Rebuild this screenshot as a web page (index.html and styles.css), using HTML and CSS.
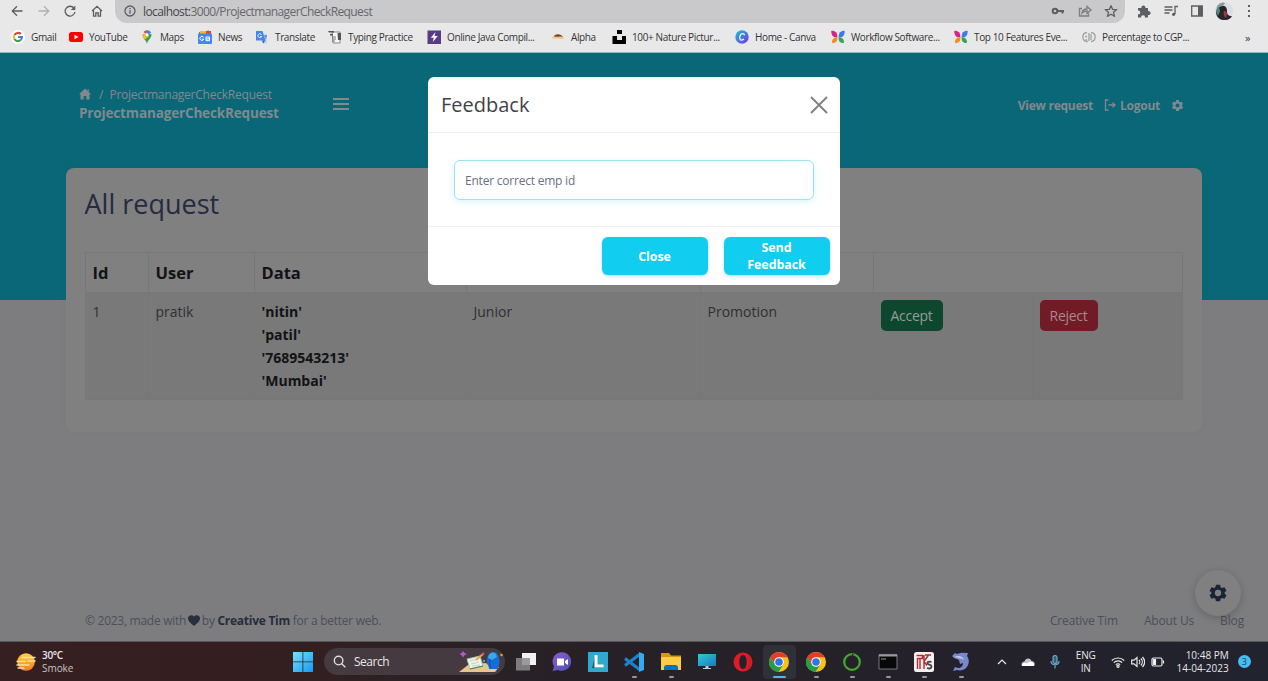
FILE: index.html
```html
<!DOCTYPE html>
<html lang="en">
<head>
<meta charset="utf-8">
<title>ProjectmanagerCheckRequest</title>
<link rel="stylesheet" href="styles.css">
</head>
<body>
<svg class="defs" width="0" height="0">
  <defs>
    <symbol id="gear" viewBox="0 0 24 24"><path fill-rule="evenodd" d="M9.5 2h5l.6 3 1.8 1 2.9-1 2.4 4.200-2.200 2v1.600l2.200 2-2.400 4.200-2.900-1-1.800 1-.6 3h-5l-.6-3-1.800-1-2.900 1-2.400-4.200 2.200-2v-1.600l-2.200-2 2.400-4.200 2.900 1 1.800-1zM12 8.200a3.800 3.800 0 1 0 0 7.600 3.800 3.800 0 0 0 0-7.600z"/></symbol>
    <symbol id="butterfly" viewBox="0 0 14 14"><path fill="#d6228a" d="M.3 1C3-.2 6 2 7 7 5 7.800 2.500 7.300 1.300 5.500.5 4.200.2 2.500.3 1z"/><path fill="#3b7de8" d="M13.700 1C11-.2 8 2 7 7c2 .8 4.500.3 5.700-1.500.8-1.300 1.100-3 1-4.500z"/><path fill="#f28b22" d="M1.200 13C.5 9.500 3 7.200 7 7c0 3.500-2.200 6.500-5.800 6z"/><path fill="#2ea55a" d="M12.800 13C13.500 9.500 11 7.200 7 7c0 3.500 2.200 6.500 5.800 6z"/><path stroke="#e9e8e9" stroke-width="1.200" d="M7 3v9"/></symbol>
    <symbol id="chrome" viewBox="0 0 20 20"><circle cx="10" cy="10" r="10" fill="#fbc116"/><path fill="#e33b2e" d="M1.340 5A10 10 0 0 1 18.660 5.300H10L5.700 12.500z"/><path fill="#269b48" d="M1.340 5A10 10 0 0 0 9.500 20L14.300 12.500 10 14.500 5.700 12.500z"/><circle cx="10" cy="10" r="4.800" fill="#fff"/><circle cx="10" cy="10" r="3.800" fill="#2b78e4"/></symbol>
  </defs>
</svg>

<header class="chrome">
  <div class="toolbar">
    <div class="nav">
      <svg viewBox="0 0 12 12"><path d="M11.500 6H1.500M6 1.300 1.300 6 6 10.700"/></svg>
      <svg class="faded" viewBox="0 0 12 12"><path d="M.5 6h10M6 1.300 10.700 6 6 10.700"/></svg>
      <svg viewBox="0 0 12 12"><path d="M10 3.200A4.900 4.900 0 1 0 10.900 7"/><path class="solid" d="M11.300.5v4.500H6.800z"/></svg>
      <svg viewBox="0 0 12 12"><path d="M1 6 6 1.300 11 6M2.500 5.200v6h2.300V8h2.400v3.200h2.300v-6"/></svg>
    </div>
    <div class="address">
      <svg class="info" viewBox="0 0 12 12"><circle cx="6" cy="6" r="5"/><path d="M6 5.300v3.500M6 2.900v1.300"/></svg>
      <span class="url"><span class="host">localhost:</span>3000/ProjectmanagerCheckRequest</span>
      <div class="address-tools">
        <svg viewBox="0 0 14 12"><circle cx="4" cy="6" r="2.300" stroke-width="2"/><path stroke-width="2" d="M6.500 6h6.500M11.500 6v2.500"/></svg>
        <svg class="share" viewBox="0 0 14 12"><path d="M4 3.500H1.500v7.500h9V8.500M4 8c.5-3 2.500-4 5-4V1.500L13 5 9 8.300V6C7 6 5.300 6.500 4 8z"/></svg>
        <svg viewBox="0 0 14 12"><path d="m7 .8 1.600 3.500 3.800.4-2.800 2.600.8 3.900L7 9.300l-3.400 1.900.8-3.900L1.600 4.700l3.800-.4z"/></svg>
      </div>
    </div>
    <div class="browser-tools">
      <svg viewBox="0 0 14 14"><path class="solid" d="M1 4h3.500a2 2 0 1 1 3.800 0H11v3.200a2 2 0 1 1 0 3.800v2.500H7.800a1.800 1.800 0 1 0-3.500 0H1v-3.300a1.800 1.800 0 1 0 0-3.500z"/></svg>
      <svg viewBox="0 0 14 14"><path d="M.5 3h8M.5 6h8M.5 9h5M11 10V2.500h3"/><circle class="solid" cx="9.600" cy="10.300" r="1.600"/></svg>
      <svg viewBox="0 0 14 14"><path d="M1.700 2h10.600v10H1.700z"/><path class="solid" d="M8 2h4.500v10H8z"/></svg>
      <svg class="avatar" viewBox="0 0 18 18"><circle cx="9" cy="9" r="9" fill="#dcdce4"/><path fill="#8e9aa0" d="M2 4c3-4 7-4 8-3L7 6 1 10z"/><path fill="#29242b" d="M8 4C4 4 0 8 1.500 13 3 17 7 18.500 10 18c4 0 6-2 7-4-4 0-5-2-5-5s-1-5-4-5z"/><path fill="#a13a3f" d="M9 9c2 0 3 1 3 3l-1 4c-2-1-3-4-2-7z"/><path fill="#4e8b7c" d="m1 9 3-4 1 4-2 5z"/></svg>
      <svg class="dots" viewBox="0 0 4 14"><path class="solid" d="M1 1h2v2H1zM1 6h2v2H1zM1 11h2v2H1z"/></svg>
    </div>
  </div>
  <nav class="bookmarks">
    <a><svg viewBox="0 0 14 14"><circle cx="7" cy="7" r="7" fill="#fff"/><g fill="none" stroke-width="2"><path stroke="#e34133" d="M3.500 5A4 4 0 0 1 9.800 4"/><path stroke="#f5b912" d="M3.400 5a4 4 0 0 0 0 4"/><path stroke="#2fa24f" d="M3.400 9a4 4 0 0 0 6.200 1"/><path stroke="#3d7ee8" d="M9.600 10A4 4 0 0 0 11 7H7"/></g></svg>Gmail</a>
    <a><svg viewBox="0 0 14 14"><rect y="2" width="14" height="10" rx="2.500" fill="#f00"/><path fill="#fff" d="m5.500 4.800 4 2.200-4 2.200z"/></svg>YouTube</a>
    <a><svg viewBox="0 0 14 14"><path fill="#2fa457" d="M7 14C6.500 10.500 2.500 8.500 2.500 4.500L11.500 4c.5 4-4 6-4.500 10z"/><path fill="#e54335" d="M3.500 2A4.600 4.600 0 0 1 7 .3l-.5 4z"/><path fill="#3f80e9" d="M6.500.3a4.600 4.600 0 0 1 4.600 2.300L7 6z"/><path fill="#f6bb1b" d="M2.500 5.500 6 3l3 3-4.500 4z"/><circle cx="7" cy="4.700" r="1.500" fill="#fff"/></svg>Maps</a>
    <a><svg viewBox="0 0 14 14"><path fill="#2fa457" d="M1 2 11 .5v4H1z"/><path fill="#f0b928" d="M2 1h10v4H2z"/><path fill="#dc4437" d="M8 1h5v3H8z"/><rect y="3.500" width="14" height="10.500" rx="1" fill="#4285f4"/><path fill="none" stroke="#fff" d="M5.500 7.200a2 2 0 1 0 .3 2H4.200M8 7h3.500v3.700H8V7m0 1.900h3.500"/></svg>News</a>
    <a><svg viewBox="0 0 14 14"><path fill="#c7d3e6" d="M6 4h6v9.500H8z"/><path fill="#4285f4" d="M1 1h6.500l3 9.500H1z"/><path fill="#2f62bc" d="M7 10.500h3.500L8 13.500z"/><path fill="none" stroke="#e8effd" d="M6.500 4.500a2 2 0 1 0 .3 2H5"/><path fill="none" stroke="#5a83bf" d="M9 6h3M11 5v1c0 2-1 3-1.500 3.500"/></svg>Translate</a>
    <a><svg viewBox="0 0 14 14"><path fill="#f7f7f7" stroke="#888" d="M4 2h8v11H5z"/><path fill="#555" d="M0 1h6v1.500H1zM9.500 3H13v7H10zM2 4h3v1.500H2z"/><path stroke="#777" d="M4 7h4M4 9h4M4 11h3"/></svg>Typing Practice</a>
    <a><svg viewBox="0 0 14 14"><path fill="#583b87" d="M.5.500h13.500v13.500H.5z"/><path fill="#fff" d="M8.500 2 3.800 7.800h3L5.700 12l5-6H7.500z"/></svg>Online Java Compil...</a>
    <a><svg viewBox="0 0 14 14"><path fill="#f3c783" d="M1 8.500C2 5 4 5 7 5s5 1 6 4z"/><path fill="#654b37" d="M3 6.500C4 3.500 10 3.500 12 7L10 6.500 6 6.800z"/></svg>Alpha</a>
    <a><svg viewBox="0 0 14 14"><path fill="#000" d="M5 0h5v4H5zM.500 6H5v4h5V6h4v8H.5z"/></svg>100+ Nature Pictur...</a>
    <a><svg viewBox="0 0 14 14"><defs><linearGradient id="canva" x2="1" y2="1"><stop stop-color="#13c9ce"/><stop offset="1" stop-color="#7a2bea"/></linearGradient></defs><circle cx="7" cy="7" r="6.700" fill="url(#canva)"/><path fill="none" stroke="#fff" stroke-width="1.200" d="M9.500 5.200C9.300 3 6 3 5 6s.5 5.500 4 3"/></svg>Home - Canva</a>
    <a><svg><use href="#butterfly"/></svg>Workflow Software...</a>
    <a><svg><use href="#butterfly"/></svg>Top 10 Features Eve...</a>
    <a><svg viewBox="0 0 14 14"><path fill="none" stroke="#a0a0a4" stroke-width="1.300" d="M5 2.500C-.5 3-.5 11 5 11.500L4 9M9 2.500c5.500.5 5.500 8.500 0 9M7 3v8M3 6.500h2M9 4v6"/></svg>Percentage to CGP...</a>
    <span class="more">»</span>
  </nav>
</header>

<main class="page">
  <div class="topbar">
    <div class="crumbs">
      <div class="trail"><svg viewBox="0 0 12 12"><path d="M6 .5 0 6.200h1.500V11.500h3.200V8h2.600v3.500h3.200V6.200H12L9.800 4.100V1.200H8.500v1.700z"/></svg><span class="slash">/</span><span class="crumb">ProjectmanagerCheckRequest</span></div>
      <h6>ProjectmanagerCheckRequest</h6>
    </div>
    <div class="burger"><i></i><i></i><i></i></div>
    <div class="links">
      <span class="view">View request</span>
      <svg class="exit" viewBox="0 0 12 12"><path d="M4.500 1H1.500v10h3M4.500 6H11M8.500 3.800 11 6 8.500 8.200"/></svg>
      <span class="logout">Logout</span>
      <svg class="cog"><use href="#gear"/></svg>
    </div>
  </div>

  <section class="card">
    <h2>All request</h2>
    <table>
      <colgroup><col class="c1"><col class="c2"><col class="c3"><col class="c4"><col class="c5"><col class="c6"><col class="c7"></colgroup>
      <thead><tr><th>Id</th><th>User</th><th>Data</th><th></th><th></th><th colspan="2"></th></tr></thead>
      <tbody><tr>
        <td>1</td><td>pratik</td>
        <td class="data">'nitin'<br>'patil'<br>'7689543213'<br>'Mumbai'</td>
        <td>Junior</td><td>Promotion</td>
        <td><button class="btn accept">Accept</button></td>
        <td><button class="btn reject">Reject</button></td>
      </tr></tbody>
    </table>
  </section>

  <footer class="footer">
    <p>© 2023, made with <svg viewBox="0 0 12 11"><path d="M6 11C2 8 0 6 0 3.300 0 .3 4-1 6 1.500 8-1 12 .3 12 3.300 12 6 10 8 6 11z"/></svg> by <b>Creative Tim</b> for a better web.</p>
    <div class="footer-links"><a>Creative Tim</a><a>About Us</a><a>Blog</a></div>
  </footer>

  <div class="fab"><svg><use href="#gear"/></svg></div>

  <div class="modal">
    <div class="modal-head"><h5>Feedback</h5><svg viewBox="0 0 18 18"><path d="m1 1 16 16M17 1 1 17"/></svg></div>
    <div class="modal-body"><div class="field">Enter correct emp id</div></div>
    <div class="modal-foot"><button class="cyan">Close</button><button class="cyan">Send<br>Feedback</button></div>
  </div>
</main>

<div class="taskbar">
  <div class="weather">
    <svg viewBox="0 0 20 18"><defs><linearGradient id="sun" x2="0" y2="1"><stop stop-color="#ffd53c"/><stop offset="1" stop-color="#f4791f"/></linearGradient></defs><circle cx="10" cy="9" r="8.800" fill="url(#sun)"/><path stroke="#f8dfb0" stroke-width="1.400" stroke-linecap="round" d="M6 4.500h13M1 8.500h8M12 8h7M1 12h12M2 15h6"/></svg>
    <div><b>30°C</b><span>Smoke</span></div>
  </div>
  <svg class="win" viewBox="0 0 20 20"><defs><linearGradient id="win" x2="1" y2="1"><stop stop-color="#75e0ff"/><stop offset="1" stop-color="#129bf3"/></linearGradient></defs><path fill="url(#win)" d="M0 0h9.500v9.500H0zM10.300 0H20v9.500h-9.700zM0 10.300h9.500V20H0zM10.300 10.300H20V20h-9.700z"/></svg>
  <div class="search">
    <svg class="glass" viewBox="0 0 14 14"><circle cx="6" cy="6" r="4.600"/><path d="m9.300 9.300 4 4"/></svg>
    <span>Search</span>
    <svg class="art" viewBox="0 0 46 22"><path fill="#e9c48f" d="M0 21 9 14 26 12 40 16 36 21z"/><path fill="#eef4ea" stroke="#a9bfae" d="M8 8 21 5 24 15 11 18z"/><path stroke="#c3d2c4" d="m11 10 8-2M12 13l8-2M13 15l8-1"/><path stroke="#3f7a5b" d="m11 18 13-3"/><path stroke="#f4a33c" stroke-width="2" d="m17 9 7-6"/><path stroke="#e6537b" stroke-width="2" d="m23 4 2-2"/><path fill="#146dd2" d="M30 18c0-4-3-4-2-9 0-10 12-11 12-1 2 5-1 6-1 10z"/><path fill="#3aa6f2" d="M29 7c1-7 8-7 9-1l-5 3z"/><path stroke="#104c9c" fill="none" d="M31 8c0 3-1 5 1 9"/><path fill="#b957d2" d="m4 0 1.500 2L8 3 5.500 4.300 4 6.500 2.700 4.300.5 3l2.200-1z"/><circle cx="42.500" cy="4" r="1.200" fill="#f0a72e"/><circle cx="25" cy="10" r="1" fill="#5bd0b8"/></svg>
  </div>
  <div class="apps">
    <span><svg viewBox="0 0 20 20"><path fill="#f1f1f2" d="M6 1h14v12H6z"/><path fill="#8d8b8d" fill-opacity=".85" d="M0 6h14v12.500H0z"/></svg></span>
    <span><svg viewBox="0 0 20 20"><defs><linearGradient id="chat" x2="1" y2="1"><stop stop-color="#8b5ec4"/><stop offset="1" stop-color="#4a51ba"/></linearGradient></defs><path fill="url(#chat)" d="M.5 19 2 14.500A9.300 9.300 0 1 1 6 18z"/><path fill="#fff" d="M5 6.500h7v7H5zM13 9l3-2v6l-3-2z"/></svg></span>
    <span><svg viewBox="0 0 20 20"><path fill="#30a9ce" d="M0 0h20v20H0z"/><path fill="#17607c" d="m4 16 3-12v9h8v3z"/><path fill="none" stroke="#fff" stroke-width="3" d="M8 3v11h7.500"/></svg></span>
    <span class="run"><svg viewBox="0 0 20 20"><path fill="none" stroke="#1b83cc" stroke-width="3.200" d="M1 6.500 15.500 17.500M1 13.500 15.500 2.500"/><path fill="#39a9ef" d="m15 0 5 2v16l-5 2z"/></svg></span>
    <span class="run"><svg viewBox="0 0 20 20"><path fill="#d89518" d="M0 1h8l2 2.500h10V17H0z"/><path fill="#ffcc45" d="M0 5h20v13H0z"/><path fill="#1272b9" d="M3 18v-3.500l2-1.500h10l2 1.500V18z"/></svg></span>
    <span><svg viewBox="0 0 20 20"><defs><linearGradient id="screen" x2="1" y2="1"><stop stop-color="#2fcbd0"/><stop offset="1" stop-color="#177bc2"/></linearGradient></defs><path fill="url(#screen)" d="M1 2h18v12H1z"/><path fill="#bfcfda" d="M8.500 14h3v2H14v1H6v-1h2.500z"/></svg></span>
    <span><svg viewBox="0 0 20 20"><path fill="#e01b28" fill-rule="evenodd" d="M10 .5a9.500 9.500 0 1 1 0 19 9.500 9.500 0 0 1 0-19zm0 2.500C7.500 3 6.300 6.500 6.300 10S7.500 17 10 17s3.700-3.500 3.700-7S12.500 3 10 3z"/><path fill="#b51a25" d="M13 2.500c5 3 5 12 0 15 6-1 7-12 0-15z"/></svg></span>
    <span class="run active"><svg><use href="#chrome"/></svg></span>
    <span class="run"><svg><use href="#chrome"/></svg></span>
    <span class="run"><svg viewBox="0 0 20 20"><circle cx="10" cy="10" r="7.800" fill="none" stroke="#42a832" stroke-width="2.200"/><path fill="#28222a" d="m10 1 2 2-2 1z"/></svg></span>
    <span class="run"><svg viewBox="0 0 20 20"><path fill="#080808" stroke="#77787c" d="M1 2.500h18V17H1z"/><path fill="#96989b" d="M1 2.500h18v2H1zM3 6.500h5v1H3z"/></svg></span>
    <span class="run"><svg viewBox="0 0 20 20"><rect width="20" height="20" rx="2.500" fill="#f4f1f0"/><g fill="none" stroke-width="1.400"><path stroke="#b62a30" d="M2.500 3.500h6v3h-5V17M6 7v10M10 3v14M14.500 3 10 9.500l3 4M11 3h6"/><path stroke="#3d4148" stroke-width="1.800" d="M17.500 10c-3-1-4.500 0-4 1.500s4 1 4 3-2 2.500-4.500 1.500"/></g></svg></span>
    <span class="run"><svg viewBox="0 0 20 20"><path fill="#7888ce" d="M1 4 4 1l2 1c5-2 8-1 11-1l-1 3c3 4 2 9-1 12-2 2-6 3-9 2l-4 1 2-4 3 1c3 0 5-2 5-5L9 12 8 8 3 6z"/><path fill="#c4cbed" d="M3 5c4-2 9-1 10 3-2-2-6-2-10-3z"/></svg></span>
  </div>
  <div class="tray">
    <svg class="up" viewBox="0 0 10 10"><path d="m1 7 4-4 4 4"/></svg>
    <svg class="cloud" viewBox="0 0 14 10"><path fill="#c3c3c8" d="M1 9C-.5 6 2 4.500 3.500 4.500 4.500 1 9 .5 10.500 4c3 0 4 3 2.500 5z"/><path fill="#fff" d="M1 9c-.5-3 3-4 5-2.500L8 5c3-1 6 1 5 4z"/></svg>
    <svg class="mic" viewBox="0 0 10 14"><rect x="3" y=".5" width="4" height="8" rx="2" fill="#35617b"/><path d="M1 6c0 5 8 5 8 0M5 10v3.500"/></svg>
    <div class="lang">ENG<br>IN</div>
    <svg class="wifi" viewBox="0 0 14 12"><path d="M.8 4.500a9 9 0 0 1 12.400 0M2.800 6.600a6 6 0 0 1 8.400 0M4.800 8.700a3 3 0 0 1 4.400 0"/><circle cx="7" cy="10.300" r="1.100"/></svg>
    <svg class="vol" viewBox="0 0 14 12"><path d="M.7 4.200H3L6 1.500v9L3 7.800H.7zM8 4c1 1 1 3 0 4M9.800 2.500c2 2 2 5 0 7M11.500 1c2.600 3 2.600 7 0 10"/></svg>
    <svg class="batt" viewBox="0 0 14 12"><rect x="1" y="2" width="10" height="8" rx="1.500"/><path fill="#fff" d="M2.500 3.500h2v5h-2zM12.500 4.500v3"/></svg>
    <div class="clock">10:48 PM<br>14-04-2023</div>
    <span class="badge">3</span>
  </div>
</div>
</body>
</html>
```
FILE: styles.css
```css
* { box-sizing: border-box; }
body { margin: 0; width: 1268px; height: 681px; overflow: hidden; display: flex; flex-direction: column; font-family: "Open Sans", "Noto Sans", sans-serif; }
svg { display: block; flex: none; }
.defs { position: absolute; }
h2, h5, h6, p { margin: 0; }
button { border: 0; font-family: inherit; padding: 0; }

/* browser */
.chrome { height: 53px; flex: none; background: #e9e8e9; border-bottom: 1px solid #8fb9bd; }
.toolbar { height: 22px; display: flex; align-items: center; }
.toolbar svg { fill: none; stroke: #5d5e61; stroke-width: 1.3; }
.toolbar .solid { fill: #5d5e61; stroke: none; }
.nav { width: 115px; padding-left: 11px; display: flex; gap: 14.500px; }
.nav svg { width: 12px; height: 12px; }
.nav .faded { opacity: .4; }
.address { width: 1010px; height: 23px; background: #c9c9cb; border-radius: 0 0 12px 12px; display: flex; align-items: center; padding-left: 9px; }
.info { width: 12px; height: 12px; }
.url { margin-left: 7px; font-size: 12px; letter-spacing: -.6px; color: #66676a; }
.host { color: #45464a; }
.address-tools { margin-left: auto; padding-right: 7px; display: flex; gap: 12.500px; }
.address-tools svg { width: 14px; height: 12px; }
.address-tools .share { opacity: .7; }
.browser-tools { padding-left: 12px; display: flex; align-items: center; gap: 12.500px; }
.browser-tools svg { width: 14px; height: 14px; }
.browser-tools .avatar { width: 18px; height: 18px; stroke: none; margin-left: -2px; }
.browser-tools .dots { width: 4px; margin-left: 2px; }
.bookmarks { height: 30px; padding-left: 11px; display: grid; grid-template-columns: 58px 71px 58px 57px 73px 99px 124px 61px 123px 96px 123px 128px 162px auto; align-items: center; font-size: 10px; letter-spacing: -.37px; color: #343438; white-space: nowrap; }
.bookmarks a { display: flex; align-items: center; gap: 6px; }
.bookmarks svg { width: 14px; height: 14px; }
.more { font-size: 11px; padding-left: 1px; }

/* page */
.page { position: relative; height: 588px; flex: none; background: linear-gradient(#0a6778 0 247px, #7d7d7f 247px); }
.topbar { height: 115px; padding: 32px 84px 0 79px; display: flex; align-items: flex-start; color: #81898d; }
.crumbs { width: 254px; }
.trail { display: flex; align-items: center; height: 18px; font-size: 12px; }
.trail svg { width: 12px; height: 12px; fill: currentColor; }
.slash { margin: 0 6px 0 8px; }
.crumb { letter-spacing: -.23px; }
.crumbs h6 { font-size: 13.500px; line-height: 21px; letter-spacing: -.15px; }
.burger { margin-top: 13px; width: 16px; display: grid; gap: 3px; }
.burger i { height: 2px; background: currentColor; }
.links { margin-left: auto; height: 40px; display: flex; align-items: center; font-size: 12px; letter-spacing: -.25px; font-weight: 700; }
.exit { width: 12px; height: 12px; margin: 0 4px 0 11px; fill: none; stroke: currentColor; stroke-width: 1.300; }
.cog { width: 13px; height: 13px; margin-left: 11px; fill: currentColor; }
.card { width: 1136px; height: 264px; margin-left: 65.500px; background: #808080; border-radius: 8px; padding: 18px 19px; box-shadow: 0 0 14px rgba(0,0,0,.02); }
.card h2 { height: 66px; font-size: 27px; line-height: 36px; font-weight: 400; color: #262b41; }
table { width: 1097px; table-layout: fixed; border-collapse: collapse; color: #2f3031; }
.c1 { width: 63px; } .c2 { width: 106px; } .c3 { width: 212px; } .c4 { width: 234px; } .c5 { width: 173px; } .c6 { width: 159px; } .c7 { width: 150px; }
th, td { border: 1px solid #767778; text-align: left; vertical-align: top; padding: 8px 6px 0 7px; }
th { height: 40px; font-size: 16.500px; line-height: 23px; color: #111315; }
td { height: 107px; padding-top: 7px; background: #797979; font-size: 14px; line-height: 23px; }
.data { font-weight: 700; color: #111315; }
.btn { display: block; height: 31px; border-radius: 5px; font-size: 14px; letter-spacing: -.3px; color: #969c98; }
.accept { width: 62px; background: #0d472d; }
.reject { width: 58px; background: #701b25; color: #aa888c; }
.footer { padding: 179px 24px 0 85px; display: flex; justify-content: space-between; font-size: 12px; letter-spacing: -.27px; line-height: 20px; color: #4a4f5a; }
.footer svg { display: inline-block; width: 12px; height: 11px; fill: #26303f; vertical-align: -1px; margin: 0 -1px; }
.footer b { color: #252d3c; }
.footer-links { display: flex; gap: 26px; letter-spacing: -.15px; }
.fab { position: absolute; left: 1195px; top: 517px; width: 46px; height: 46px; border-radius: 50%; background: #808080; display: grid; place-items: center; box-shadow: 0 2px 8px rgba(0,0,0,.2); }
.fab svg { width: 20px; height: 20px; fill: #1a2438; }

/* dialog */
.modal { position: absolute; left: 428px; top: 24px; width: 411.500px; height: 208px; border-radius: 6px; background: #fff; color: #3f4347; overflow: hidden; }
.modal-head { height: 56px; padding: 0 12px 0 13px; display: flex; align-items: center; justify-content: space-between; border-bottom: 1px solid #eeeff0; }
.modal-head h5 { font-size: 20px; font-weight: 400; }
.modal-head svg { width: 18px; height: 18px; stroke: #7e7e7e; stroke-width: 1.800; }
.modal-body { height: 94px; padding: 26.500px 26px 0; border-bottom: 1px solid #eef1f3; }
.field { height: 40px; border: 1.500px solid #96e5f0; border-radius: 6px; box-shadow: 0 2px 6px rgba(17,205,239,.16); padding-left: 10px; font-size: 12px; line-height: 39px; letter-spacing: -.22px; color: #687184; }
.modal-foot { padding: 10px 10px 0; display: flex; justify-content: flex-end; gap: 16px; }
.cyan { width: 106px; height: 38px; border-radius: 6px; background: #11cdef; color: #fff; font-size: 12.500px; letter-spacing: -.1px; font-weight: 700; line-height: 17px; box-shadow: 0 1px 3px rgba(17,140,170,.35); }

/* taskbar */
.taskbar { flex: 1; background: linear-gradient(90deg, #351f20 0, #341f20 280px, #282126 510px, #24212a 950px, #21232e); border-top: 1px solid #58575a; padding-bottom: 1px; display: flex; align-items: center; color: #e8e6e8; font-size: 10px; line-height: 13px; }
.weather { width: 293px; padding-left: 16px; display: flex; align-items: center; gap: 6px; }
.weather svg { width: 20px; height: 18px; }
.weather b, .weather span { display: block; font-weight: 400; letter-spacing: -.3px; }
.weather b { font-weight: 600; }
.weather span { color: #c9c2c3; letter-spacing: -.05px; }
.win { width: 20px; height: 20px; }
.search { width: 181px; height: 27px; margin-left: 11px; border-radius: 14px; background: #443a3f; display: flex; align-items: center; padding-left: 9px; font-size: 12px; letter-spacing: -.5px; }
.glass { width: 13px; height: 13px; fill: none; stroke: #dedadd; stroke-width: 1.500; margin-right: 8px; }
.art { width: 46px; height: 22px; margin-left: auto; }
.apps { margin-left: 2.500px; display: grid; grid-template-columns: repeat(13, 36.250px); height: 39px; }
.apps span { display: grid; place-items: center; position: relative; }
.apps svg { width: 20px; height: 20px; }
.run::after { content: ""; position: absolute; left: 16px; bottom: 3px; width: 5px; height: 2px; border-radius: 1px; background: #9a989c; }
.active svg { position: relative; }
.active::before { content: ""; position: absolute; inset: 3px 2px 2px; border-radius: 4px; background: #303039; }
.active::after { left: 12px; width: 13px; background: #58b5e2; }
.tray { margin-left: 18px; display: flex; align-items: center; flex: 1; }
.tray svg { fill: none; stroke: #e9e9ec; stroke-width: 1.200; }
.up { width: 10px; height: 10px; }
.tray .cloud { width: 14px; height: 10px; margin-left: 14px; stroke: none; }
.tray .mic { width: 10px; height: 14px; margin-left: 15px; stroke: #69a9c8; }
.lang { width: 32px; margin-left: 10px; text-align: center; letter-spacing: -.2px; }
.wifi, .vol, .batt { width: 14px; height: 12px; }
.wifi { margin-left: 9px; }
.vol { margin-left: 6px; }
.batt { margin-left: 6px; }
.clock { width: 64px; text-align: right; white-space: nowrap; display: block; }
.badge { width: 13px; height: 13px; margin-left: 9px; border-radius: 50%; background: #46bdf5; color: #173f5c; font-size: 9px; text-align: center; }
```
